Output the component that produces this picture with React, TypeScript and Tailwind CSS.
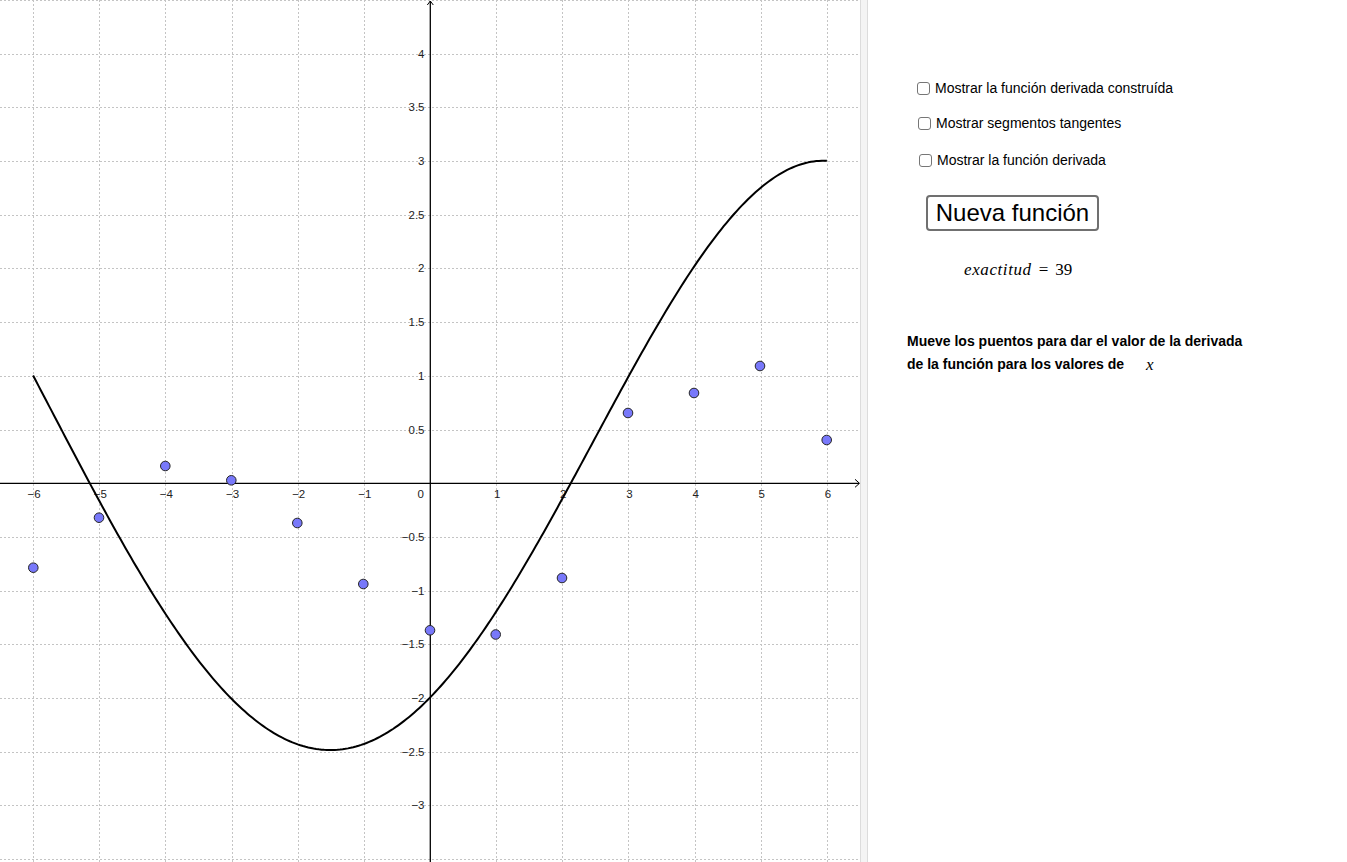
import { useMemo } from "react";

// graph mapping (math units -> px) measured from the view
const X0 = 430;
const UX = 66.15;
const Y0 = 483.2;
const UY = 107.4;
const px = (x: number) => X0 + UX * x;
const py = (y: number) => Y0 - UY * y;

const VIEW_W = 860;
const VIEW_H = 862;

/** points read off the shown function, smoothed by a least squares fit */
const CURVE: [number, number][] = [
  [-6, 1.0],
  [-5.57, 0.5],
  [-5.14, 0],
  [-4.33, -0.9],
  [-3.03, -1.99],
  [-2, -2.41],
  [-1.5, -2.49],
  [-1, -2.44],
  [0, -2.0],
  [1.11, -1.09],
  [2.12, 0],
  [3, 1.0],
  [4, 2.0],
  [5, 2.77],
  [5.5, 2.94],
  [6, 3.0],
];

/** the draggable guesses, pixel centres */
const DOTS: [number, number][] = [
  [33.3, 567.7],
  [99, 517.7],
  [165.3, 466],
  [231.3, 480.3],
  [297.3, 523],
  [363.3, 584],
  [430, 630.3],
  [495.7, 634.5],
  [562, 578],
  [628, 413],
  [694, 393],
  [760, 366],
  [826.7, 440],
];

function polyFit(pts: [number, number][], deg: number) {
  const m = deg + 1;
  const A: number[][] = Array.from({ length: m }, () => new Array(m + 1).fill(0));
  for (const [x, y] of pts) {
    const t = x / 6;
    const pw: number[] = [];
    for (let i = 0; i < m; i++) pw.push(Math.pow(t, i));
    for (let r = 0; r < m; r++) {
      for (let c = 0; c < m; c++) A[r][c] += pw[r] * pw[c];
      A[r][m] += pw[r] * y;
    }
  }
  for (let i = 0; i < m; i++) {
    let best = i;
    for (let r = i + 1; r < m; r++) if (Math.abs(A[r][i]) > Math.abs(A[best][i])) best = r;
    [A[i], A[best]] = [A[best], A[i]];
    for (let r = 0; r < m; r++) {
      if (r === i) continue;
      const f = A[r][i] / A[i][i];
      for (let c = i; c <= m; c++) A[r][c] -= f * A[i][c];
    }
  }
  const coef = A.map((row, i) => row[m] / row[i]);
  return (x: number) => {
    const t = x / 6;
    let s = 0;
    for (let i = m - 1; i >= 0; i--) s = s * t + coef[i];
    return s;
  };
}

const fmt = (v: number) => (v < 0 ? "\u2212" : "") + String(Math.abs(v));

function Graph() {
  const curvePath = useMemo(() => {
    const f = polyFit(CURVE, 6);
    const parts: string[] = [];
    for (let x = -6; x <= 6.0001; x += 0.04) {
      parts.push(`${parts.length ? "L" : "M"}${px(x).toFixed(2)},${py(f(x)).toFixed(2)}`);
    }
    return parts.join(" ");
  }, []);

  const xTicks = [-6, -5, -4, -3, -2, -1, 1, 2, 3, 4, 5, 6];
  const yGrid: number[] = [];
  for (let v = -3.5; v <= 4.5; v += 0.5) if (v !== 0) yGrid.push(v);
  const yLabels = [4, 3.5, 3, 2.5, 2, 1.5, 1, 0.5, -0.5, -1, -1.5, -2, -2.5, -3];

  return (
    <svg width={VIEW_W} height={VIEW_H} className="block shrink-0 bg-white">
      <g stroke="#c4c4c4" strokeWidth={1} strokeDasharray="2 2" shapeRendering="crispEdges">
        {xTicks.map((k) => {
          const x = Math.round(px(k)) + 0.5;
          return <line key={`v${k}`} x1={x} y1={0} x2={x} y2={VIEW_H} />;
        })}
        {yGrid.map((v) => {
          const y = Math.round(py(v)) + 0.5;
          return <line key={`h${v}`} x1={0} y1={y} x2={858} y2={y} />;
        })}
      </g>

      {/* axes */}
      <g stroke="#000" strokeWidth={1.3} fill="none">
        <line x1={0} y1={483.3} x2={859} y2={483.3} />
        <polyline points="855,479.3 859.5,483.3 855,487.3" strokeWidth={1} />
        <line x1={430.3} y1={1} x2={430.3} y2={VIEW_H} />
        <polyline points="427.3,5 430.3,1 433.3,5" strokeWidth={1} />
      </g>

      <g fontFamily="'Liberation Sans', Arial, sans-serif" fontSize={11.5} fill="#222">
        {xTicks.map((k) => (
          <text key={`xl${k}`} x={px(k) + 1} y={497.5} textAnchor="middle">
            {fmt(k)}
          </text>
        ))}
        <text x={424} y={497.5} textAnchor="end">
          0
        </text>
        {yLabels.map((v) => (
          <text key={`yl${v}`} x={424.5} y={py(v) + 4} textAnchor="end">
            {fmt(v)}
          </text>
        ))}
      </g>

      <path d={curvePath} fill="none" stroke="#000" strokeWidth={2} strokeLinejoin="round" />

      <g fill="#7878fa" stroke="#262626" strokeWidth={1}>
        {DOTS.map(([x, y], i) => (
          <circle key={i} cx={x} cy={y} r={4.8} />
        ))}
      </g>
    </svg>
  );
}

function Check({ label, indent }: { label: string; indent: string }) {
  return (
    <div className={`flex h-[18px] items-center ${indent}`}>
      <span className="h-[13px] w-[13px] shrink-0 rounded-[3px] border border-[#767676] bg-white" />
      <span className="ml-[5px] whitespace-nowrap">{label}</span>
    </div>
  );
}

export default function App() {
  return (
    <div className="flex h-[862px] w-[1347px] overflow-hidden bg-white">
      <Graph />
      <div className="h-full w-[8px] shrink-0 border-x border-[#dcdcdc] bg-[#f4f4f4]" />
      <div className="flex-1 pt-[79px] font-['Liberation_Sans',Arial,sans-serif] text-[14px] text-black">
        <Check label="Mostrar la función derivada construída" indent="ml-[49px]" />
        <div className="mt-[17px]">
          <Check label="Mostrar segmentos tangentes" indent="ml-[50px]" />
        </div>
        <div className="mt-[19px]">
          <Check label="Mostrar la función derivada" indent="ml-[51px]" />
        </div>

        <button className="ml-[58px] mt-[26px] flex h-[36px] w-[173px] items-center justify-center rounded-[4px] border-2 border-[#707070] bg-white text-[24px] leading-none text-black">
          Nueva función
        </button>

        <div className="ml-[96px] mt-[27px] flex h-[24px] items-center font-['Liberation_Serif',serif] text-[17px]">
          <span className="italic tracking-[0.6px]">exactitud</span>
          <span className="mx-[7px]">=</span>
          <span>39</span>
        </div>

        <div className="ml-[39px] mt-[48px] text-[14px] font-bold leading-[23px]">
          <div className="whitespace-nowrap">Mueve los puentos para dar el valor de la derivada</div>
          <div className="flex items-center whitespace-nowrap">
            <span>de la función para los valores de</span>
            <span className="ml-[22px] font-['Liberation_Serif',serif] text-[17px] font-normal italic">x</span>
          </div>
        </div>
      </div>
    </div>
  );
}
